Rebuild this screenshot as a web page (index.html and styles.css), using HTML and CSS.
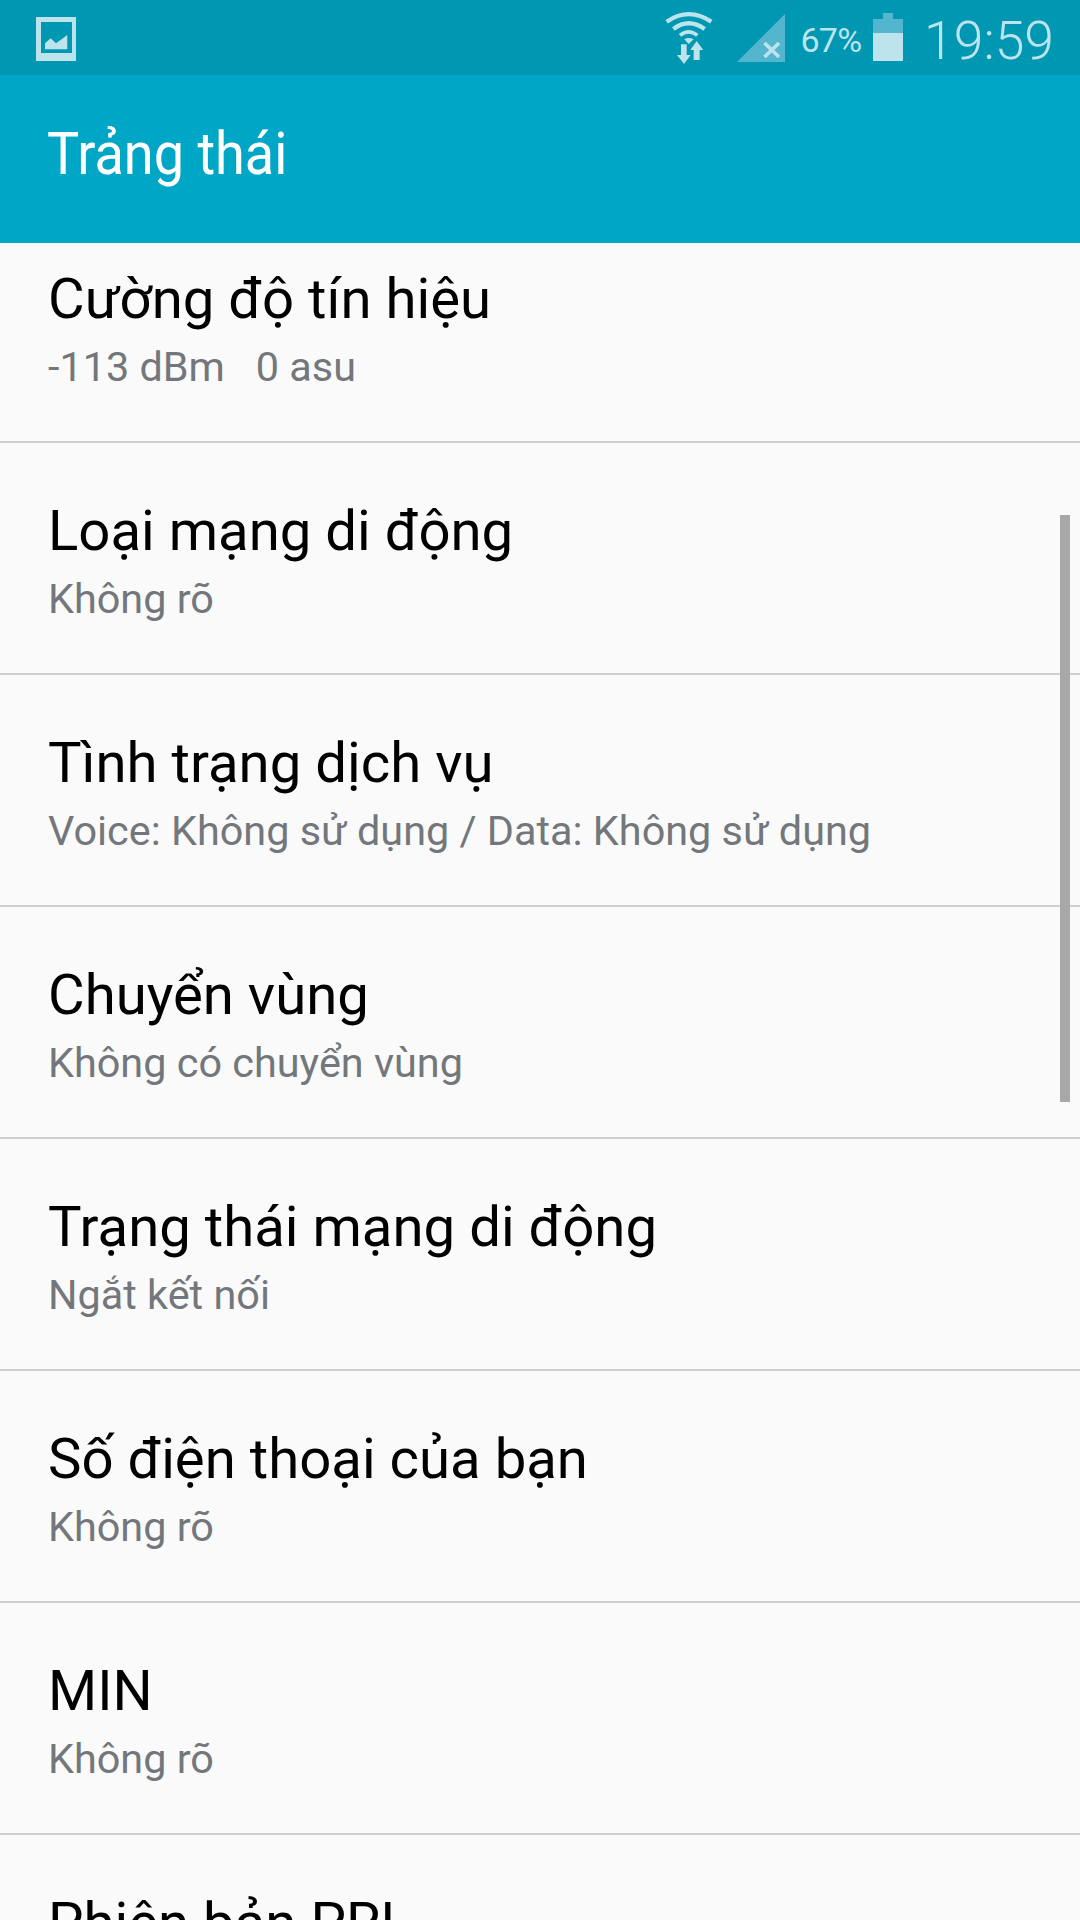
FILE: index.html
```html
<!DOCTYPE html>
<html lang="vi">
<head>
<meta charset="utf-8">
<title>Trạng thái</title>
<link rel="stylesheet" href="styles.css">
</head>
<body>
<div class="screen">
  <header class="statusbar">
    <svg class="ic-image" viewBox="0 0 40 44" width="40" height="44">
      <path fill="#bde3ec" fill-rule="evenodd" d="M0 0H40V44H0ZM5 5V36H36V5Z"/>
      <path fill="#bde3ec" d="M9 32.300V26.300L14.700 21.300L20 26.300L31.300 18V32.300Z"/>
    </svg>
    <div class="status-right">
      <svg class="ic-wifi" viewBox="0 0 210 195" width="70" height="65">
        <g fill="none" stroke="#bde3ec">
          <path stroke-width="13" d="M32 50Q98 5 166 50"/>
          <path stroke-width="13" d="M52 72Q98 38 146 72"/>
          <path stroke-width="11" d="M72 91Q98 70 124 91"/>
        </g>
        <g fill="#bde3ec">
          <path d="M85 103Q98 95 113 103L98 117Z"/>
          <path d="M75 118H92V150H104L84 177L63 150H75Z"/>
          <path d="M113 165V135H103L122 108L142 135H131V165Z"/>
        </g>
      </svg>
      <svg class="ic-signal" viewBox="0 0 48 48" width="48" height="48">
        <path fill="#53b6ce" d="M48 0V48H0Z"/>
        <path stroke="#bde3ec" stroke-width="3.700" fill="none" d="M27.500 29L42 43M42 29L27.500 43"/>
      </svg>
      <span class="percent">67%</span>
      <svg class="ic-battery" viewBox="0 0 30 48" width="30" height="48">
        <path fill="#53b6ce" d="M10 0H20V6H30V20H0V6H10Z"/>
        <path fill="#bde3ec" d="M0 20H30V48H0Z"/>
      </svg>
      <span class="clock">19:59</span>
    </div>
  </header>
  <div class="appbar"><h1 class="appbar-title">Trảng thái</h1></div>
  <main class="content">
    <div class="list">
      <section class="row"><div class="row-title">Cường độ tín hiệu</div><div class="row-sub">-113 dBm&nbsp;&nbsp; 0 asu</div></section>
      <section class="row"><div class="row-title">Loại mạng di động</div><div class="row-sub">Không rõ</div></section>
      <section class="row"><div class="row-title">Tình trạng dịch vụ</div><div class="row-sub">Voice: Không sử dụng / Data: Không sử dụng</div></section>
      <section class="row"><div class="row-title">Chuyển vùng</div><div class="row-sub">Không có chuyển vùng</div></section>
      <section class="row"><div class="row-title">Trạng thái mạng di động</div><div class="row-sub">Ngắt kết nối</div></section>
      <section class="row"><div class="row-title">Số điện thoại của bạn</div><div class="row-sub">Không rõ</div></section>
      <section class="row"><div class="row-title">MIN</div><div class="row-sub">Không rõ</div></section>
      <section class="row"><div class="row-title">Phiên bản PRL</div></section>
    </div>
    <div class="scrollbar"></div>
  </main>
</div>
</body>
</html>
```
FILE: styles.css
```css
html, body { margin: 0; padding: 0; }
body { width: 1080px; height: 1920px; overflow: hidden; font-family: Roboto, "Noto Sans", sans-serif; background: #fafafa; }
.screen { width: 1080px; height: 1920px; display: flex; flex-direction: column; overflow: hidden; }
.statusbar { height: 75px; flex: none; background: #0097b3; display: flex; align-items: flex-start; justify-content: space-between; padding: 0 26px 0 36px; box-sizing: border-box; }
.ic-image { margin-top: 17px; display: block; }
.status-right { display: flex; align-items: flex-start; }
.ic-wifi { margin-top: 5px; display: block; }
.ic-signal { margin-top: 14px; margin-left: 11px; display: block; }
.percent { margin-top: 20px; margin-left: 15.500px; width: 64.500px; font-size: 34px; line-height: 40px; color: #bde3ec; letter-spacing: -0.800px; white-space: nowrap; }
.ic-battery { margin-top: 13px; margin-left: 8px; display: block; }
.clock { margin-top: 10px; margin-left: 21px; font-size: 53.500px; line-height: 61px; font-weight: 300; color: #bde3ec; white-space: nowrap; }
.appbar { height: 168px; flex: none; background: #00a6c6; display: flex; align-items: center; padding: 0 0 12px 47px; box-sizing: border-box; }
.appbar-title { margin: 0; font-size: 60px; font-weight: 400; color: #fff; transform: scaleX(.9); transform-origin: left center; white-space: nowrap; }
.content { flex: 1; position: relative; overflow: hidden; }
.list { margin-top: -32px; }
.row { height: 232px; box-sizing: border-box; border-bottom: 2px solid #cfcfcf; padding: 53px 0 0 48px; }
.row-title { font-size: 56.300px; line-height: 70px; color: #000; white-space: nowrap; }
.row-sub { margin-top: 8px; font-size: 41.400px; line-height: 50px; color: #73777b; white-space: nowrap; }
.scrollbar { position: absolute; right: 10px; top: 272px; width: 10px; height: 587px; background: #a8a8a8; }
```
